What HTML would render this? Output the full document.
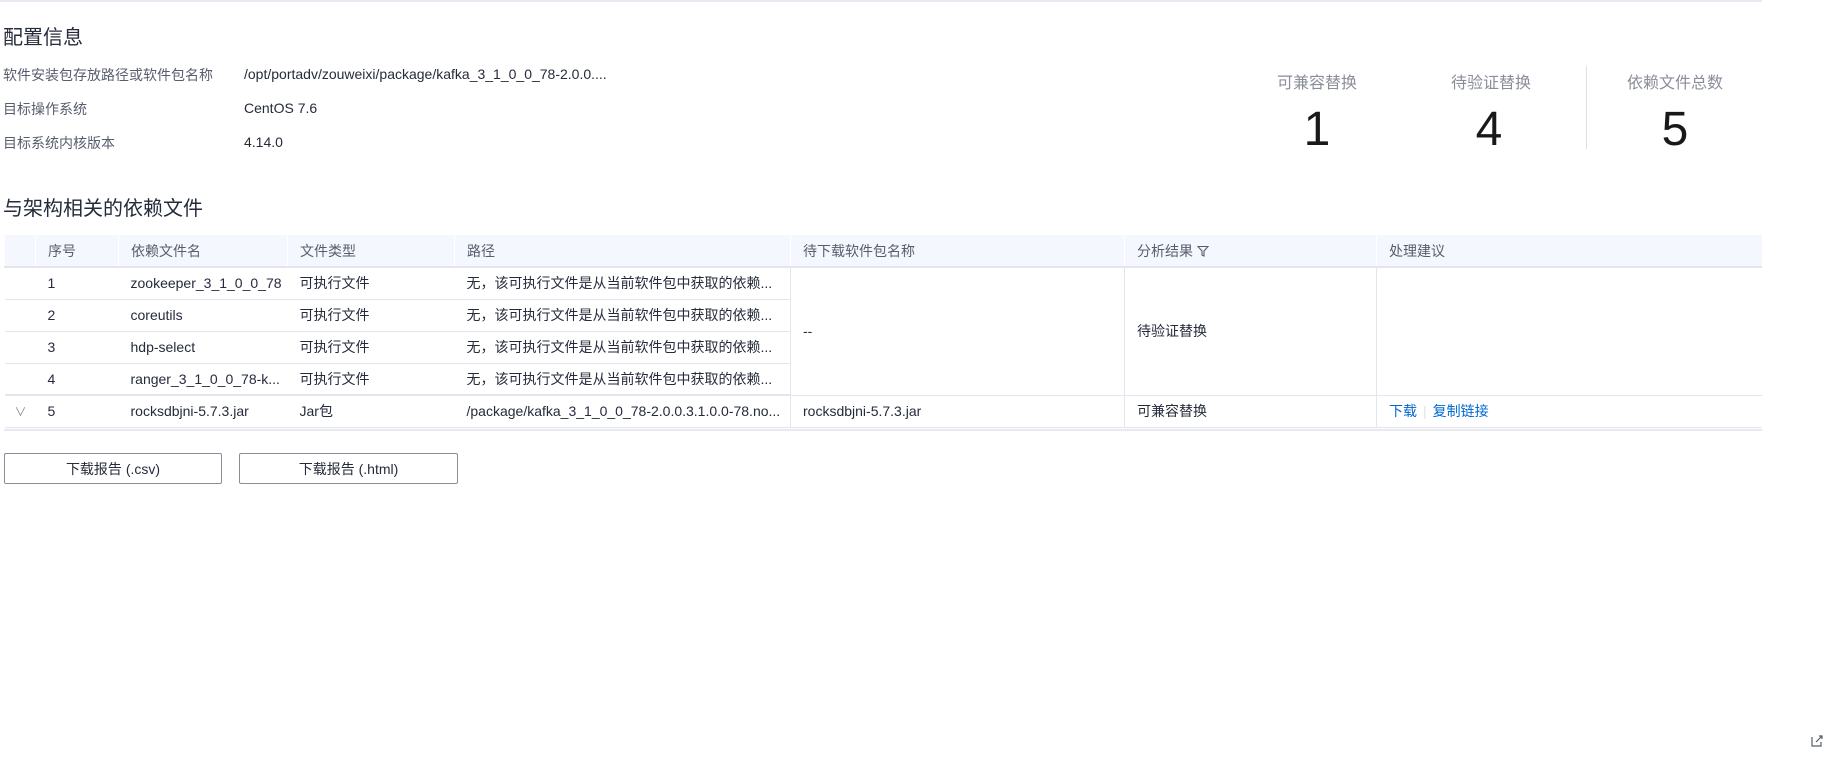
<!DOCTYPE html>
<html><head><meta charset="utf-8">
<style>
*{margin:0;padding:0;box-sizing:border-box}
body{width:1836px;height:768px;background:#fff;font-family:"Liberation Sans","Noto Sans CJK SC",sans-serif;color:#252b3a;position:relative;overflow:hidden}
.abs{position:absolute;white-space:nowrap}
.topline{position:absolute;left:0;top:0;width:1762px;height:2px;background:#e6e9f0}
.h{font-size:20px;color:#252b3a}
.lbl{font-size:14px;color:#575d6c}
.val{font-size:14px;color:#252b3a}
.sl{font-size:16px;color:#8a8e99;transform:translateX(-50%)}
.num{font-size:48px;color:#191919;transform:translateX(-50%);font-weight:300}
table{position:absolute;left:4px;top:235px;width:1758px;border-collapse:collapse;font-size:14px;table-layout:fixed}
th{background:#f4f8fe;height:32px;text-align:left;font-weight:normal;color:#575d6c;padding-left:12px;border-bottom:2px solid #e3e6ee;border-left:1px solid #fff}
td{height:32px;padding-left:12px;border-bottom:1px solid #e3e6ee;white-space:nowrap;overflow:hidden;text-overflow:ellipsis}
td.b{border-left:1px solid #e3e6ee}
.btn{position:absolute;top:453px;height:31px;border:1px solid #8a8e99;border-radius:2px;font-size:14px;display:flex;align-items:center;justify-content:center;color:#252b3a}
a{color:#0067d1;text-decoration:none}
</style></head><body>
<div class="topline"></div>
<div class="abs h" style="left:3px;top:21px">配置信息</div>
<div class="abs lbl" style="left:3px;top:65px">软件安装包存放路径或软件包名称</div>
<div class="abs val" style="left:244px;top:66px">/opt/portadv/zouweixi/package/kafka_3_1_0_0_78-2.0.0....</div>
<div class="abs lbl" style="left:3px;top:99px">目标操作系统</div>
<div class="abs val" style="left:244px;top:100px">CentOS 7.6</div>
<div class="abs lbl" style="left:3px;top:133px">目标系统内核版本</div>
<div class="abs val" style="left:244px;top:134px">4.14.0</div>

<div class="abs sl" style="left:1317px;top:69px">可兼容替换</div>
<div class="abs sl" style="left:1491px;top:69px">待验证替换</div>
<div class="abs sl" style="left:1675px;top:69px">依赖文件总数</div>
<div style="position:absolute;left:1586px;top:66px;width:1px;height:83px;background:#dfe1e6"></div>
<div class="abs num" style="left:1317px;top:102px">1</div>
<div class="abs num" style="left:1489px;top:102px">4</div>
<div class="abs num" style="left:1675px;top:102px">5</div>

<div class="abs h" style="left:3px;top:192px">与架构相关的依赖文件</div>

<table>
<colgroup><col style="width:31px"><col style="width:83px"><col style="width:169px"><col style="width:167px"><col style="width:336px"><col style="width:334px"><col style="width:252px"><col></colgroup>
<tr><th></th><th>序号</th><th>依赖文件名</th><th>文件类型</th><th>路径</th><th>待下载软件包名称</th><th>分析结果 <svg width="12" height="12" viewBox="0 0 12 12" style="vertical-align:-1px"><path d="M1 1.5h10L7 6v5L5 10V6z" fill="none" stroke="#575d6c" stroke-width="1.1"/></svg></th><th>处理建议</th></tr>
<tr><td></td><td>1</td><td>zookeeper_3_1_0_0_78</td><td>可执行文件</td><td>无，该可执行文件是从当前软件包中获取的依赖...</td><td class="b" rowspan="4">--</td><td class="b" rowspan="4">待验证替换</td><td class="b" rowspan="4"></td></tr>
<tr><td></td><td>2</td><td>coreutils</td><td>可执行文件</td><td>无，该可执行文件是从当前软件包中获取的依赖...</td></tr>
<tr><td></td><td>3</td><td>hdp-select</td><td>可执行文件</td><td>无，该可执行文件是从当前软件包中获取的依赖...</td></tr>
<tr><td style="border-bottom:2px solid #e3e6ee"></td><td style="border-bottom:2px solid #e3e6ee">4</td><td style="border-bottom:2px solid #e3e6ee">ranger_3_1_0_0_78-k...</td><td style="border-bottom:2px solid #e3e6ee">可执行文件</td><td style="border-bottom:2px solid #e3e6ee">无，该可执行文件是从当前软件包中获取的依赖...</td></tr>
<tr><td style="color:#8a8e99;font-size:12px;padding-left:10px">∨</td><td>5</td><td>rocksdbjni-5.7.3.jar</td><td>Jar包</td><td>/package/kafka_3_1_0_0_78-2.0.0.3.1.0.0-78.no...</td><td class="b">rocksdbjni-5.7.3.jar</td><td class="b">可兼容替换</td><td class="b"><a>下载</a><span style="color:#dfe1e6;margin:0 6px">|</span><a>复制链接</a></td></tr>
</table>
<div style="position:absolute;left:4px;top:429px;width:1758px;height:2px;background:#e6e9f0"></div>

<div class="btn" style="left:4px;width:218px">下载报告 (.csv)</div>
<div class="btn" style="left:239px;width:219px">下载报告 (.html)</div>

<svg style="position:absolute;left:1810px;top:734px" width="14" height="14" viewBox="0 0 14 14"><path d="M2 3v9h9V8M6 8l6-6M9 2h3v3" fill="none" stroke="#575d6c" stroke-width="1.2"/></svg>
</body></html>
